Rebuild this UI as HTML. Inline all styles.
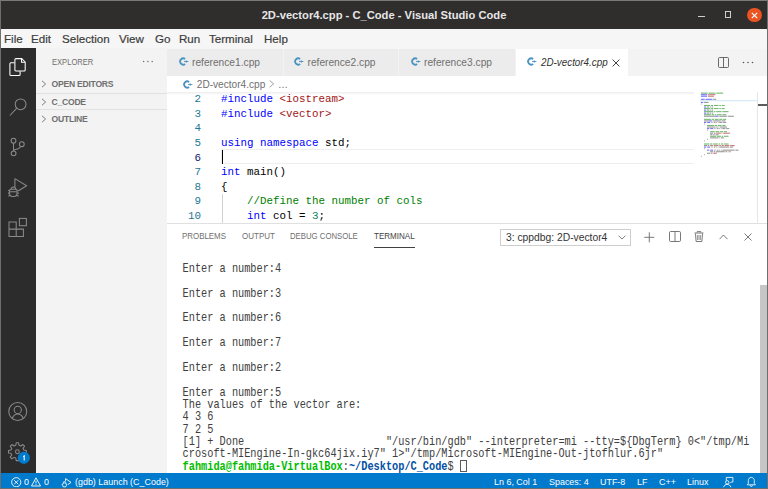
<!DOCTYPE html>
<html><head><meta charset="utf-8">
<style>
*{margin:0;padding:0;box-sizing:border-box}
html,body{width:768px;height:489px;overflow:hidden;background:#fff;font-family:"Liberation Sans",sans-serif}
.a{position:absolute}
#title{left:0;top:0;width:768px;height:29px;background:#302d2d}
#menu{left:0;top:29px;width:768px;height:20px;background:#f6f6f6}
#act{left:0;top:48px;width:36px;height:425px;background:#2c2c2c}
#side{left:36px;top:48px;width:131px;height:425px;background:#f3f3f3}
#tabs{left:167px;top:49px;width:601px;height:27px;background:#f3f3f3}
#crumb{left:167px;top:76px;width:601px;height:16px;background:#fff}
#editor{left:167px;top:92px;width:601px;height:131px;background:#fff;overflow:hidden}
#panel{left:167px;top:223px;width:601px;height:250px;background:#fff;border-top:1px solid #e0e0e0}
#status{left:0;top:473px;width:768px;height:15px;background:#007acc;color:#fff}
.mi{position:absolute;top:33px;font-size:11.6px;color:#3c3c3c;white-space:nowrap;-webkit-text-stroke:0.2px #3c3c3c}
.tab{position:absolute;top:0;height:27px;background:#ececec}
.tabt{position:absolute;top:7.9px;font-size:10.2px;color:#6f6f6f;white-space:nowrap}
.ci{position:absolute}
.code{position:absolute;left:54px;font-family:"Liberation Mono",monospace;font-size:10.83px;white-space:pre;color:#000;line-height:14.57px}
.ln{position:absolute;width:34px;text-align:right;font-family:"Liberation Mono",monospace;font-size:10.83px;color:#237893;line-height:14.57px}
.kw{color:#0000ff}.st{color:#a31515}.cm{color:#008000}.nm{color:#098658}
.term{position:absolute;left:15.6px;transform:scaleY(1.2);transform-origin:0 50%;font-family:"Liberation Mono",monospace;font-size:10.27px;white-space:pre;color:#404040;line-height:12.32px}
.ptx{position:absolute;font-size:8.6px;color:#6f6f6f;top:10px;white-space:nowrap}
.sb{position:absolute;top:2.8px;font-size:9.5px;transform:scaleX(0.94);transform-origin:0 0;color:#fff;white-space:nowrap}
</style></head><body>
<div id="title" class="a">
  <div class="a" style="left:0;top:0;width:768px;text-align:center;top:8.8px;font-size:11.2px;font-weight:bold;color:#e6e6e6;">2D-vector4.cpp - C_Code - Visual Studio Code</div>
  <div class="a" style="left:698.3px;top:16px;width:6.8px;height:1px;background:#cfcfcf"></div>
  <div class="a" style="left:725px;top:11.3px;width:6.2px;height:6.6px;border:1px solid #cfcfcf;border-top-width:1.6px"></div>
  <div class="a" style="left:747px;top:7.5px;width:14.5px;height:14.5px;border-radius:50%;background:#e95420"></div>
  <svg class="a" style="left:747px;top:7.5px" width="15" height="15" viewBox="0 0 15 15"><path d="M4.8 4.8L10.2 10.2M10.2 4.8L4.8 10.2" stroke="#fff" stroke-width="1.2"/></svg>
</div>
<div id="menu" class="a">
  <span class="mi" style="left:4px;top:3px">File</span>
  <span class="mi" style="left:31px;top:3px">Edit</span>
  <span class="mi" style="left:62px;top:3px">Selection</span>
  <span class="mi" style="left:119px;top:3px">View</span>
  <span class="mi" style="left:155px;top:3px">Go</span>
  <span class="mi" style="left:179px;top:3px">Run</span>
  <span class="mi" style="left:209px;top:3px">Terminal</span>
  <span class="mi" style="left:264px;top:3px">Help</span>
</div>
<div id="act" class="a"></div>
<svg class="a" style="left:0;top:0" width="36" height="473" viewBox="0 0 36 473">
  <g fill="none" stroke="#fff" stroke-width="1.05" stroke-linejoin="round">
    <path d="M16 58.6h5.8l3.4 3.4v8c0 0.6-0.4 1-1 1h-8.3c-0.6 0-1-0.4-1-1v-10.4c0-0.6 0.4-1 1.1-1z"/>
    <path d="M21.5 58.9v3.3h3.4"/>
    <path d="M14.4 62.8h-3.5c-0.6 0-1 0.4-1 1v10.7c0 0.6 0.4 1 1 1h8.2c0.6 0 1-0.4 1-1v-3.3"/>
  </g>
  <g fill="none" stroke="#8a8a8a" stroke-width="1.05">
    <circle cx="20.6" cy="104.3" r="5.4"/>
    <path d="M16.6 108.4L9.9 115.5"/>
    <circle cx="13.5" cy="140.7" r="2.4"/>
    <circle cx="13.6" cy="153.3" r="2.4"/>
    <circle cx="21.8" cy="144.2" r="2.4"/>
    <path d="M13.5 143.1v7.8"/>
    <path d="M20.6 146.4c-0.6 1.8-2.5 2.8-5.1 3.0c-1 0.1-1.8 0.6-1.9 1.5"/>
    <path d="M14.9 178.6v8.3M14.9 178.6L26.6 185.8L18.6 190.7"/>
    <path d="M10.6 189.2h5.4c0.6 0 1 0.4 1 1v3.2c0 1.7-1.5 3-3.2 3h-1c-1.7 0-3.2-1.3-3.2-3v-3.2c0-0.6 0.4-1 1-1z"/>
    <path d="M11.3 189.1c0-1.3 1-2.2 2.2-2.2s2.2 0.9 2.2 2.2M8.2 190.3l1.6 0.8M18.8 190.3l-1.6 0.8M8 193.1h1.6M19 193.1h-1.6M8.4 196.3l1.5-1M18.6 196.3l-1.5-1M10.1 191.7h6.8"/>
    <path d="M9 221.9h7.2v14.5H9zM9 229.1h14.4v7.3H16.2"/>
    <rect x="19.4" y="218.4" width="7" height="7.3"/>
    <circle cx="17.75" cy="411.45" r="9.0"/>
    <circle cx="17.75" cy="409.9" r="3.6"/>
    <path d="M12.3 418.3c1.1-2.8 3-4.3 5.45-4.3s4.35 1.5 5.45 4.3"/>
    <path d="M23.79 450.06 L26.32 450.50 L26.32 452.90 L23.79 453.34 L23.08 455.06 L24.55 457.16 L22.86 458.85 L20.76 457.38 L19.04 458.09 L18.60 460.62 L16.20 460.62 L15.76 458.09 L14.04 457.38 L11.94 458.85 L10.25 457.16 L11.72 455.06 L11.01 453.34 L8.48 452.90 L8.48 450.50 L11.01 450.06 L11.72 448.34 L10.25 446.24 L11.94 444.55 L14.04 446.02 L15.76 445.31 L16.20 442.78 L18.60 442.78 L19.04 445.31 L20.76 446.02 L22.86 444.55 L24.55 446.24 L23.08 448.34Z" stroke-linejoin="round"/>
    <circle cx="17.4" cy="451.7" r="1.9"/>
  </g>
  <circle cx="23.8" cy="457.8" r="6.1" fill="#007acc"/>
  <path d="M23.2 456.6l1-0.7v4.6" fill="none" stroke="#fff" stroke-width="1.1"/>
</svg>
<div id="side" class="a">
  <span class="a" style="left:15.6px;top:9px;font-size:9.2px;color:#6f6f6f;white-space:nowrap;transform:scaleX(0.825);transform-origin:0 0">EXPLORER</span>
  <svg class="a" style="left:105.5px;top:12.2px" width="12" height="3" viewBox="0 0 12 3"><circle cx="1.6" cy="1.5" r="0.75" fill="#6f6f6f"/><circle cx="5.9" cy="1.5" r="0.75" fill="#6f6f6f"/><circle cx="10.2" cy="1.5" r="0.75" fill="#6f6f6f"/></svg>
  <svg class="a" style="left:5px;top:32px" width="6" height="8" viewBox="0 0 6 8"><path d="M1 0.8L4.6 4L1 7.2" fill="none" stroke="#6f6f6f" stroke-width="0.9"/></svg>
  <span class="a" style="left:15.5px;top:31px;font-size:8.6px;font-weight:bold;color:#6f6f6f;letter-spacing:-0.25px;white-space:nowrap">OPEN EDITORS</span>
  <div class="a" style="left:0;top:45px;width:131px;height:1px;background:#e1e1e1"></div>
  <svg class="a" style="left:5px;top:50px" width="6" height="8" viewBox="0 0 6 8"><path d="M1 0.8L4.6 4L1 7.2" fill="none" stroke="#6f6f6f" stroke-width="0.9"/></svg>
  <span class="a" style="left:15.5px;top:49px;font-size:8.6px;font-weight:bold;color:#6f6f6f;letter-spacing:-0.25px;white-space:nowrap">C_CODE</span>
  <div class="a" style="left:0;top:61px;width:131px;height:1px;background:#e1e1e1"></div>
  <svg class="a" style="left:5px;top:67px" width="6" height="8" viewBox="0 0 6 8"><path d="M1 0.8L4.6 4L1 7.2" fill="none" stroke="#6f6f6f" stroke-width="0.9"/></svg>
  <span class="a" style="left:15.5px;top:66px;font-size:8.6px;font-weight:bold;color:#6f6f6f;letter-spacing:-0.25px;white-space:nowrap">OUTLINE</span>
</div>
<div id="tabs" class="a">
  <div class="tab" style="left:0;width:116px"></div>
  <div class="tab" style="left:117px;width:114px"></div>
  <div class="tab" style="left:232px;width:116px"></div>
  <div class="tab" style="left:349px;width:112px;background:#fff"></div>
  <svg class="a" style="left:11.5px;top:7.8px" width="10" height="9" viewBox="0 0 10 9"><path d="M6.1 2.0A3.1 3.1 0 1 0 6.1 7.0" fill="none" stroke="#4a93c0" stroke-width="1.8"/><path d="M5.0 4.5h4.4M7.3 3.3v2.4" stroke="#4a93c0" stroke-width="0.9"/></svg><span class="tabt" style="left:25px">reference1.cpp</span>
  <svg class="a" style="left:127.0px;top:7.8px" width="10" height="9" viewBox="0 0 10 9"><path d="M6.1 2.0A3.1 3.1 0 1 0 6.1 7.0" fill="none" stroke="#4a93c0" stroke-width="1.8"/><path d="M5.0 4.5h4.4M7.3 3.3v2.4" stroke="#4a93c0" stroke-width="0.9"/></svg><span class="tabt" style="left:140.5px">reference2.cpp</span>
  <svg class="a" style="left:243.5px;top:7.8px" width="10" height="9" viewBox="0 0 10 9"><path d="M6.1 2.0A3.1 3.1 0 1 0 6.1 7.0" fill="none" stroke="#4a93c0" stroke-width="1.8"/><path d="M5.0 4.5h4.4M7.3 3.3v2.4" stroke="#4a93c0" stroke-width="0.9"/></svg><span class="tabt" style="left:257px">reference3.cpp</span>
  <svg class="a" style="left:359.5px;top:7.8px" width="10" height="9" viewBox="0 0 10 9"><path d="M6.1 2.0A3.1 3.1 0 1 0 6.1 7.0" fill="none" stroke="#4a93c0" stroke-width="1.8"/><path d="M5.0 4.5h4.4M7.3 3.3v2.4" stroke="#4a93c0" stroke-width="0.9"/></svg><span class="tabt" style="left:373.5px;color:#333;font-style:italic;transform:scaleX(0.965);transform-origin:0 0">2D-vector4.cpp</span>
  <svg class="a" style="left:445px;top:9.5px" width="8" height="8" viewBox="0 0 8 8"><path d="M0.6 0.6L7.4 7.4M7.4 0.6L0.6 7.4" stroke="#424242" stroke-width="1"/></svg>
  <svg class="a" style="left:551px;top:7.5px" width="11" height="11" viewBox="0 0 11 11"><rect x="0.5" y="0.5" width="10" height="10" rx="1" fill="none" stroke="#5a5a5a" stroke-width="0.9"/><path d="M5.5 0.5v10" stroke="#5a5a5a" stroke-width="0.9"/></svg>
  <svg class="a" style="left:575px;top:11.5px" width="12" height="3" viewBox="0 0 12 3"><circle cx="1.5" cy="1.5" r="0.8" fill="#5a5a5a"/><circle cx="6" cy="1.5" r="0.8" fill="#5a5a5a"/><circle cx="10.5" cy="1.5" r="0.8" fill="#5a5a5a"/></svg>
</div>
<div id="crumb" class="a">
  <svg class="a" style="left:16.0px;top:3.5px" width="10" height="9" viewBox="0 0 10 9"><path d="M6.1 2.0A3.1 3.1 0 1 0 6.1 7.0" fill="none" stroke="#4a93c0" stroke-width="1.8"/><path d="M5.0 4.5h4.4M7.3 3.3v2.4" stroke="#4a93c0" stroke-width="0.9"/></svg><span class="a" style="left:29.8px;top:3.4px;font-size:10.1px;color:#6f6f6f;white-space:nowrap">2D-vector4.cpp</span>
  <svg class="a" style="left:102.4px;top:4.3px" width="6" height="8" viewBox="0 0 6 8"><path d="M0.6 0.4L4.6 3.8L0.6 7.2" fill="none" stroke="#888" stroke-width="0.8"/></svg>
  <span class="a" style="left:111px;top:3.4px;font-size:10px;color:#6f6f6f">…</span>
</div>
<div id="editor" class="a">
<div class="a" style="left:54px;top:57.38px;width:473px;height:15px;border:1px solid #eeeeee;border-right:none"></div>
<div class="a" style="left:54.5px;top:57.88px;width:1.4px;height:14px;background:#000"></div>
<div class="a" style="left:54.5px;top:101.59px;width:1px;height:43.71px;background:#d3d3d3"></div>
<div class="ln" style="left:0;top:0.30px">2</div>
<div class="code" style="top:0.30px"><span class="kw">#include</span> <span class="st">&lt;iostream&gt;</span></div>
<div class="ln" style="left:0;top:14.87px">3</div>
<div class="code" style="top:14.87px"><span class="kw">#include</span> <span class="st">&lt;vector&gt;</span></div>
<div class="ln" style="left:0;top:29.44px">4</div>
<div class="code" style="top:29.44px"></div>
<div class="ln" style="left:0;top:44.01px">5</div>
<div class="code" style="top:44.01px"><span class="kw">using</span> <span class="kw">namespace</span> std;</div>
<div class="ln" style="left:0;top:58.58px;color:#0b216f">6</div>
<div class="code" style="top:58.58px"></div>
<div class="ln" style="left:0;top:73.15px">7</div>
<div class="code" style="top:73.15px"><span class="kw">int</span> main()</div>
<div class="ln" style="left:0;top:87.72px">8</div>
<div class="code" style="top:87.72px">{</div>
<div class="ln" style="left:0;top:102.29px">9</div>
<div class="code" style="top:102.29px">    <span class="cm">//Define the number of cols</span></div>
<div class="ln" style="left:0;top:116.86px">10</div>
<div class="code" style="top:116.86px">    <span class="kw">int</span> col = <span class="nm">3</span>;</div>
<div class="ln" style="left:0;top:131.43px">11</div>
<div class="code" style="top:131.43px">    <span class="kw">int</span> row = <span class="nm">2</span>;</div>
</div>
<svg class="a" style="left:700px;top:92px" width="58" height="70" viewBox="0 0 58 70">
<rect x="0" y="8.20" width="57" height="1" fill="#9fd0f0" fill-opacity="0.5"/>
<rect x="0.90" y="0.60" width="6.90" height="1.1" fill="#008000" fill-opacity="0.55"/><rect x="8.57" y="0.60" width="6.90" height="1.1" fill="#008000" fill-opacity="0.55"/><rect x="16.24" y="0.60" width="6.90" height="1.1" fill="#008000" fill-opacity="0.55"/><rect x="0.90" y="2.14" width="6.14" height="1.1" fill="#0000ff" fill-opacity="0.55"/><rect x="7.80" y="2.14" width="7.67" height="1.1" fill="#a31515" fill-opacity="0.55"/><rect x="0.90" y="3.68" width="6.14" height="1.1" fill="#0000ff" fill-opacity="0.55"/><rect x="7.80" y="3.68" width="6.14" height="1.1" fill="#a31515" fill-opacity="0.55"/><rect x="0.90" y="6.76" width="3.83" height="1.1" fill="#0000ff" fill-opacity="0.55"/><rect x="5.50" y="6.76" width="6.90" height="1.1" fill="#0000ff" fill-opacity="0.55"/><rect x="13.17" y="6.76" width="3.07" height="1.1" fill="#000000" fill-opacity="0.4"/><rect x="0.90" y="9.85" width="2.30" height="1.1" fill="#0000ff" fill-opacity="0.55"/><rect x="3.97" y="9.85" width="4.60" height="1.1" fill="#000000" fill-opacity="0.4"/><rect x="0.90" y="11.39" width="0.77" height="1.1" fill="#000000" fill-opacity="0.4"/><rect x="3.97" y="12.93" width="6.14" height="1.1" fill="#008000" fill-opacity="0.55"/><rect x="10.87" y="12.93" width="2.30" height="1.1" fill="#008000" fill-opacity="0.55"/><rect x="13.94" y="12.93" width="4.60" height="1.1" fill="#008000" fill-opacity="0.55"/><rect x="19.31" y="12.93" width="1.53" height="1.1" fill="#008000" fill-opacity="0.55"/><rect x="21.61" y="12.93" width="3.07" height="1.1" fill="#008000" fill-opacity="0.55"/><rect x="3.97" y="14.47" width="2.30" height="1.1" fill="#0000ff" fill-opacity="0.55"/><rect x="7.04" y="14.47" width="2.30" height="1.1" fill="#000000" fill-opacity="0.4"/><rect x="10.10" y="14.47" width="0.77" height="1.1" fill="#000000" fill-opacity="0.4"/><rect x="11.64" y="14.47" width="0.77" height="1.1" fill="#098658" fill-opacity="0.55"/><rect x="12.41" y="14.47" width="0.77" height="1.1" fill="#000000" fill-opacity="0.4"/><rect x="3.97" y="16.01" width="6.14" height="1.1" fill="#008000" fill-opacity="0.55"/><rect x="10.87" y="16.01" width="2.30" height="1.1" fill="#008000" fill-opacity="0.55"/><rect x="13.94" y="16.01" width="4.60" height="1.1" fill="#008000" fill-opacity="0.55"/><rect x="19.31" y="16.01" width="1.53" height="1.1" fill="#008000" fill-opacity="0.55"/><rect x="21.61" y="16.01" width="3.07" height="1.1" fill="#008000" fill-opacity="0.55"/><rect x="3.97" y="17.55" width="2.30" height="1.1" fill="#0000ff" fill-opacity="0.55"/><rect x="7.04" y="17.55" width="2.30" height="1.1" fill="#000000" fill-opacity="0.4"/><rect x="10.10" y="17.55" width="0.77" height="1.1" fill="#000000" fill-opacity="0.4"/><rect x="11.64" y="17.55" width="0.77" height="1.1" fill="#098658" fill-opacity="0.55"/><rect x="12.41" y="17.55" width="0.77" height="1.1" fill="#000000" fill-opacity="0.4"/><rect x="3.97" y="19.09" width="9.20" height="1.1" fill="#008000" fill-opacity="0.55"/><rect x="13.94" y="19.09" width="1.53" height="1.1" fill="#008000" fill-opacity="0.55"/><rect x="16.24" y="19.09" width="5.37" height="1.1" fill="#008000" fill-opacity="0.55"/><rect x="22.38" y="19.09" width="6.14" height="1.1" fill="#008000" fill-opacity="0.55"/><rect x="3.97" y="20.63" width="2.30" height="1.1" fill="#0000ff" fill-opacity="0.55"/><rect x="7.04" y="20.63" width="2.30" height="1.1" fill="#000000" fill-opacity="0.4"/><rect x="10.10" y="20.63" width="0.77" height="1.1" fill="#000000" fill-opacity="0.4"/><rect x="11.64" y="20.63" width="0.77" height="1.1" fill="#098658" fill-opacity="0.55"/><rect x="12.41" y="20.63" width="0.77" height="1.1" fill="#000000" fill-opacity="0.4"/><rect x="3.97" y="22.17" width="6.90" height="1.1" fill="#008000" fill-opacity="0.55"/><rect x="11.64" y="22.17" width="2.30" height="1.1" fill="#008000" fill-opacity="0.55"/><rect x="14.71" y="22.17" width="1.53" height="1.1" fill="#008000" fill-opacity="0.55"/><rect x="17.01" y="22.17" width="4.60" height="1.1" fill="#008000" fill-opacity="0.55"/><rect x="22.38" y="22.17" width="3.83" height="1.1" fill="#008000" fill-opacity="0.55"/><rect x="3.97" y="23.71" width="11.51" height="1.1" fill="#000000" fill-opacity="0.4"/><rect x="15.47" y="23.71" width="2.30" height="1.1" fill="#0000ff" fill-opacity="0.55"/><rect x="17.77" y="23.71" width="0.77" height="1.1" fill="#000000" fill-opacity="0.4"/><rect x="19.31" y="23.71" width="7.67" height="1.1" fill="#000000" fill-opacity="0.4"/><rect x="27.74" y="23.71" width="6.14" height="1.1" fill="#000000" fill-opacity="0.4"/><rect x="3.97" y="26.80" width="6.90" height="1.1" fill="#008000" fill-opacity="0.55"/><rect x="11.64" y="26.80" width="2.30" height="1.1" fill="#008000" fill-opacity="0.55"/><rect x="14.71" y="26.80" width="3.83" height="1.1" fill="#008000" fill-opacity="0.55"/><rect x="19.31" y="26.80" width="3.07" height="1.1" fill="#008000" fill-opacity="0.55"/><rect x="23.14" y="26.80" width="3.07" height="1.1" fill="#008000" fill-opacity="0.55"/><rect x="3.97" y="28.34" width="5.37" height="1.1" fill="#000000" fill-opacity="0.4"/><rect x="9.34" y="28.34" width="2.30" height="1.1" fill="#0000ff" fill-opacity="0.55"/><rect x="11.64" y="28.34" width="0.77" height="1.1" fill="#000000" fill-opacity="0.4"/><rect x="13.17" y="28.34" width="7.67" height="1.1" fill="#000000" fill-opacity="0.4"/><rect x="21.61" y="28.34" width="3.83" height="1.1" fill="#000000" fill-opacity="0.4"/><rect x="3.97" y="29.88" width="2.30" height="1.1" fill="#0000ff" fill-opacity="0.55"/><rect x="7.04" y="29.88" width="0.77" height="1.1" fill="#000000" fill-opacity="0.4"/><rect x="7.80" y="29.88" width="2.30" height="1.1" fill="#0000ff" fill-opacity="0.55"/><rect x="10.87" y="29.88" width="0.77" height="1.1" fill="#000000" fill-opacity="0.4"/><rect x="12.41" y="29.88" width="0.77" height="1.1" fill="#000000" fill-opacity="0.4"/><rect x="13.94" y="29.88" width="1.53" height="1.1" fill="#000000" fill-opacity="0.4"/><rect x="16.24" y="29.88" width="0.77" height="1.1" fill="#000000" fill-opacity="0.4"/><rect x="17.77" y="29.88" width="0.77" height="1.1" fill="#000000" fill-opacity="0.4"/><rect x="19.31" y="29.88" width="3.07" height="1.1" fill="#000000" fill-opacity="0.4"/><rect x="23.14" y="29.88" width="3.07" height="1.1" fill="#000000" fill-opacity="0.4"/><rect x="3.97" y="31.42" width="0.77" height="1.1" fill="#000000" fill-opacity="0.4"/><rect x="7.04" y="32.96" width="6.90" height="1.1" fill="#008000" fill-opacity="0.55"/><rect x="14.71" y="32.96" width="2.30" height="1.1" fill="#008000" fill-opacity="0.55"/><rect x="17.77" y="32.96" width="3.83" height="1.1" fill="#008000" fill-opacity="0.55"/><rect x="22.38" y="32.96" width="3.07" height="1.1" fill="#008000" fill-opacity="0.55"/><rect x="7.04" y="34.50" width="8.44" height="1.1" fill="#000000" fill-opacity="0.4"/><rect x="16.24" y="34.50" width="1.53" height="1.1" fill="#000000" fill-opacity="0.4"/><rect x="18.54" y="34.50" width="0.77" height="1.1" fill="#000000" fill-opacity="0.4"/><rect x="20.07" y="34.50" width="6.90" height="1.1" fill="#000000" fill-opacity="0.4"/><rect x="7.04" y="36.04" width="2.30" height="1.1" fill="#0000ff" fill-opacity="0.55"/><rect x="10.10" y="36.04" width="0.77" height="1.1" fill="#000000" fill-opacity="0.4"/><rect x="10.87" y="36.04" width="2.30" height="1.1" fill="#0000ff" fill-opacity="0.55"/><rect x="13.94" y="36.04" width="0.77" height="1.1" fill="#000000" fill-opacity="0.4"/><rect x="15.47" y="36.04" width="0.77" height="1.1" fill="#000000" fill-opacity="0.4"/><rect x="17.01" y="36.04" width="1.53" height="1.1" fill="#000000" fill-opacity="0.4"/><rect x="19.31" y="36.04" width="0.77" height="1.1" fill="#000000" fill-opacity="0.4"/><rect x="20.84" y="36.04" width="0.77" height="1.1" fill="#000000" fill-opacity="0.4"/><rect x="22.38" y="36.04" width="3.07" height="1.1" fill="#000000" fill-opacity="0.4"/><rect x="26.21" y="36.04" width="3.07" height="1.1" fill="#000000" fill-opacity="0.4"/><rect x="7.04" y="37.58" width="0.77" height="1.1" fill="#000000" fill-opacity="0.4"/><rect x="10.10" y="39.12" width="4.60" height="1.1" fill="#008000" fill-opacity="0.55"/><rect x="15.47" y="39.12" width="3.83" height="1.1" fill="#008000" fill-opacity="0.55"/><rect x="20.07" y="39.12" width="3.07" height="1.1" fill="#008000" fill-opacity="0.55"/><rect x="23.91" y="39.12" width="3.07" height="1.1" fill="#008000" fill-opacity="0.55"/><rect x="10.10" y="40.67" width="3.07" height="1.1" fill="#000000" fill-opacity="0.4"/><rect x="13.94" y="40.67" width="1.53" height="1.1" fill="#000000" fill-opacity="0.4"/><rect x="16.24" y="40.67" width="4.60" height="1.1" fill="#a31515" fill-opacity="0.55"/><rect x="21.61" y="40.67" width="0.77" height="1.1" fill="#a31515" fill-opacity="0.55"/><rect x="23.14" y="40.67" width="6.90" height="1.1" fill="#a31515" fill-opacity="0.55"/><rect x="10.10" y="42.21" width="2.30" height="1.1" fill="#000000" fill-opacity="0.4"/><rect x="13.17" y="42.21" width="1.53" height="1.1" fill="#000000" fill-opacity="0.4"/><rect x="15.47" y="42.21" width="3.07" height="1.1" fill="#000000" fill-opacity="0.4"/><rect x="10.10" y="43.75" width="6.14" height="1.1" fill="#008000" fill-opacity="0.55"/><rect x="17.01" y="43.75" width="3.83" height="1.1" fill="#008000" fill-opacity="0.55"/><rect x="21.61" y="43.75" width="1.53" height="1.1" fill="#008000" fill-opacity="0.55"/><rect x="23.91" y="43.75" width="4.60" height="1.1" fill="#008000" fill-opacity="0.55"/><rect x="10.10" y="45.29" width="8.44" height="1.1" fill="#000000" fill-opacity="0.4"/><rect x="19.31" y="45.29" width="0.77" height="1.1" fill="#000000" fill-opacity="0.4"/><rect x="20.84" y="45.29" width="3.07" height="1.1" fill="#000000" fill-opacity="0.4"/><rect x="7.04" y="46.83" width="0.77" height="1.1" fill="#000000" fill-opacity="0.4"/><rect x="3.97" y="48.37" width="0.77" height="1.1" fill="#000000" fill-opacity="0.4"/><rect x="3.97" y="51.45" width="5.37" height="1.1" fill="#008000" fill-opacity="0.55"/><rect x="10.10" y="51.45" width="2.30" height="1.1" fill="#008000" fill-opacity="0.55"/><rect x="13.17" y="51.45" width="4.60" height="1.1" fill="#008000" fill-opacity="0.55"/><rect x="18.54" y="51.45" width="1.53" height="1.1" fill="#008000" fill-opacity="0.55"/><rect x="20.84" y="51.45" width="2.30" height="1.1" fill="#008000" fill-opacity="0.55"/><rect x="23.91" y="51.45" width="4.60" height="1.1" fill="#008000" fill-opacity="0.55"/><rect x="3.97" y="52.99" width="3.07" height="1.1" fill="#000000" fill-opacity="0.4"/><rect x="7.80" y="52.99" width="1.53" height="1.1" fill="#000000" fill-opacity="0.4"/><rect x="10.10" y="52.99" width="3.07" height="1.1" fill="#a31515" fill-opacity="0.55"/><rect x="13.94" y="52.99" width="4.60" height="1.1" fill="#a31515" fill-opacity="0.55"/><rect x="19.31" y="52.99" width="1.53" height="1.1" fill="#a31515" fill-opacity="0.55"/><rect x="21.61" y="52.99" width="2.30" height="1.1" fill="#a31515" fill-opacity="0.55"/><rect x="24.68" y="52.99" width="4.60" height="1.1" fill="#a31515" fill-opacity="0.55"/><rect x="30.05" y="52.99" width="4.60" height="1.1" fill="#a31515" fill-opacity="0.55"/><rect x="3.97" y="54.53" width="2.30" height="1.1" fill="#0000ff" fill-opacity="0.55"/><rect x="7.04" y="54.53" width="0.77" height="1.1" fill="#000000" fill-opacity="0.4"/><rect x="7.80" y="54.53" width="2.30" height="1.1" fill="#0000ff" fill-opacity="0.55"/><rect x="10.87" y="54.53" width="0.77" height="1.1" fill="#000000" fill-opacity="0.4"/><rect x="12.41" y="54.53" width="0.77" height="1.1" fill="#000000" fill-opacity="0.4"/><rect x="13.94" y="54.53" width="1.53" height="1.1" fill="#000000" fill-opacity="0.4"/><rect x="16.24" y="54.53" width="0.77" height="1.1" fill="#000000" fill-opacity="0.4"/><rect x="17.77" y="54.53" width="0.77" height="1.1" fill="#000000" fill-opacity="0.4"/><rect x="19.31" y="54.53" width="9.97" height="1.1" fill="#000000" fill-opacity="0.4"/><rect x="30.05" y="54.53" width="3.07" height="1.1" fill="#000000" fill-opacity="0.4"/><rect x="3.97" y="56.08" width="0.77" height="1.1" fill="#000000" fill-opacity="0.4"/><rect x="7.04" y="57.62" width="2.30" height="1.1" fill="#0000ff" fill-opacity="0.55"/><rect x="10.10" y="57.62" width="0.77" height="1.1" fill="#000000" fill-opacity="0.4"/><rect x="10.87" y="57.62" width="2.30" height="1.1" fill="#0000ff" fill-opacity="0.55"/><rect x="13.94" y="57.62" width="0.77" height="1.1" fill="#000000" fill-opacity="0.4"/><rect x="15.47" y="57.62" width="0.77" height="1.1" fill="#000000" fill-opacity="0.4"/><rect x="17.01" y="57.62" width="1.53" height="1.1" fill="#000000" fill-opacity="0.4"/><rect x="19.31" y="57.62" width="0.77" height="1.1" fill="#000000" fill-opacity="0.4"/><rect x="20.84" y="57.62" width="0.77" height="1.1" fill="#000000" fill-opacity="0.4"/><rect x="22.38" y="57.62" width="12.27" height="1.1" fill="#000000" fill-opacity="0.4"/><rect x="35.41" y="57.62" width="3.07" height="1.1" fill="#000000" fill-opacity="0.4"/><rect x="10.10" y="59.16" width="3.07" height="1.1" fill="#000000" fill-opacity="0.4"/><rect x="13.94" y="59.16" width="1.53" height="1.1" fill="#000000" fill-opacity="0.4"/><rect x="16.24" y="59.16" width="8.44" height="1.1" fill="#000000" fill-opacity="0.4"/><rect x="25.44" y="59.16" width="1.53" height="1.1" fill="#000000" fill-opacity="0.4"/><rect x="27.74" y="59.16" width="0.77" height="1.1" fill="#a31515" fill-opacity="0.55"/><rect x="29.28" y="59.16" width="0.77" height="1.1" fill="#a31515" fill-opacity="0.55"/><rect x="30.05" y="59.16" width="0.77" height="1.1" fill="#000000" fill-opacity="0.4"/><rect x="7.04" y="60.70" width="3.07" height="1.1" fill="#000000" fill-opacity="0.4"/><rect x="10.87" y="60.70" width="1.53" height="1.1" fill="#000000" fill-opacity="0.4"/><rect x="13.17" y="60.70" width="3.07" height="1.1" fill="#a31515" fill-opacity="0.55"/><rect x="16.24" y="60.70" width="0.77" height="1.1" fill="#000000" fill-opacity="0.4"/><rect x="3.97" y="62.24" width="0.77" height="1.1" fill="#000000" fill-opacity="0.4"/><rect x="0.90" y="63.78" width="0.77" height="1.1" fill="#000000" fill-opacity="0.4"/>
</svg>
<div class="a" style="left:757px;top:92px;width:1px;height:131px;background:#e6e6e6"></div>
<div class="a" style="left:758px;top:104px;width:9px;height:1.6px;background:#5c5c5c"></div>
<div class="a" style="left:167px;top:92px;width:527px;height:3px;background:linear-gradient(to bottom, rgba(0,0,0,0.07), rgba(0,0,0,0))"></div>
<div id="panel" class="a">
<span class="a" style="left:15.300000000000011px;top:6.3px;font-size:9.9px;color:#6f6f6f;white-space:nowrap;transform:scaleX(0.801);transform-origin:0 0;">PROBLEMS</span>
<span class="a" style="left:74.5px;top:6.3px;font-size:9.9px;color:#6f6f6f;white-space:nowrap;transform:scaleX(0.810);transform-origin:0 0;">OUTPUT</span>
<span class="a" style="left:123.10000000000002px;top:6.3px;font-size:9.9px;color:#6f6f6f;white-space:nowrap;transform:scaleX(0.787);transform-origin:0 0;">DEBUG CONSOLE</span>
<span class="a" style="left:206.89999999999998px;top:6.3px;font-size:9.9px;color:#424242;white-space:nowrap;transform:scaleX(0.813);transform-origin:0 0;">TERMINAL</span>
<div class="a" style="left:207px;top:23.19999999999999px;width:41px;height:1px;background:#424242"></div>
<div class="a" style="left:332.5px;top:5px;width:131px;height:16.5px;border:1px solid #cecece;background:#fff"></div>
<span class="a" style="left:339.3px;top:7.599999999999994px;font-size:10px;color:#333;white-space:nowrap;transform:scaleX(1.03);transform-origin:0 0">3: cppdbg: 2D-vector4</span>
<svg class="a" style="left:450.5px;top:11px" width="8" height="5" viewBox="0 0 8 5"><path d="M0.6 0.8L4 4L7.4 0.8" fill="none" stroke="#6f6f6f" stroke-width="0.9"/></svg>
<svg class="a" style="left:477px;top:7.5px" width="11" height="11" viewBox="0 0 11 11"><path d="M5.3 0.3v10M0.3 5.3h10" stroke="#6a6a6a" stroke-width="0.9"/></svg>
<svg class="a" style="left:501.5px;top:7px" width="12" height="11" viewBox="0 0 12 11"><rect x="0.5" y="0.5" width="11" height="10" rx="1.2" fill="none" stroke="#6a6a6a" stroke-width="0.9"/><path d="M6 0.5v10" stroke="#6a6a6a" stroke-width="0.9"/></svg>
<svg class="a" style="left:526.5px;top:7px" width="10" height="11" viewBox="0 0 10 11"><path d="M3.2 1.5V0.6h3.6v0.9M0.5 2h9M1.5 2.5l0.6 8h5.8l0.6-8" fill="none" stroke="#6a6a6a" stroke-width="0.9"/><path d="M3.6 4v5M5 4v5M6.4 4v5" stroke="#6a6a6a" stroke-width="0.7"/></svg>
<svg class="a" style="left:552px;top:9.800000000000011px" width="9" height="6" viewBox="0 0 9 6"><path d="M0.5 5.2L4.5 1L8.5 5.2" fill="none" stroke="#6a6a6a" stroke-width="0.9"/></svg>
<svg class="a" style="left:577.3px;top:9px" width="8" height="8" viewBox="0 0 8 8"><path d="M0.5 0.5L7.5 7.5M7.5 0.5L0.5 7.5" stroke="#6a6a6a" stroke-width="0.9"/></svg>
<div class="term" style="top:25.69px"></div>
<div class="term" style="top:38.04px">Enter a number:4</div>
<div class="term" style="top:50.39px"></div>
<div class="term" style="top:62.74px">Enter a number:3</div>
<div class="term" style="top:75.09px"></div>
<div class="term" style="top:87.44px">Enter a number:6</div>
<div class="term" style="top:99.79px"></div>
<div class="term" style="top:112.14px">Enter a number:7</div>
<div class="term" style="top:124.49px"></div>
<div class="term" style="top:136.84px">Enter a number:2</div>
<div class="term" style="top:149.19px"></div>
<div class="term" style="top:161.54px">Enter a number:5</div>
<div class="term" style="top:173.89px">The values of the vector are:</div>
<div class="term" style="top:186.24px">4 3 6</div>
<div class="term" style="top:198.59px">7 2 5</div>
<div class="term" style="top:210.94px">[1] + Done                       "/usr/bin/gdb" --interpreter=mi --tty=${DbgTerm} 0&lt;"/tmp/Mi</div>
<div class="term" style="top:223.29px">crosoft-MIEngine-In-gkc64jix.iy7" 1&gt;"/tmp/Microsoft-MIEngine-Out-jtofhlur.6jr"</div>
<div class="term" style="top:235.64px"><b style="color:#00bc00">fahmida@fahmida-VirtualBox</b>:<b style="color:#0451a5">~/Desktop/C_Code</b>$ </div>
<div class="a" style="left:293.3px;top:235.9px;width:6.4px;height:11.7px;border:1px solid #5a5a5a"></div>
<div class="a" style="left:593px;top:60.5px;width:7px;height:188.5px;background:#c6c6c6"></div>
</div>
<div id="status" class="a">
  <svg class="a" style="left:11px;top:3.8px" width="10.5" height="10.5" viewBox="0 0 10.5 10.5"><circle cx="5.25" cy="5.25" r="4.6" fill="none" stroke="#fff" stroke-width="0.9"/><path d="M3.3 3.3L7.2 7.2M7.2 3.3L3.3 7.2" stroke="#fff" stroke-width="0.9"/></svg>
  <span class="sb" style="left:23.5px">0</span>
  <svg class="a" style="left:31.3px;top:3.6px" width="11" height="10" viewBox="0 0 11 10"><path d="M5 0.8L9.5 9.0H0.5Z" fill="none" stroke="#fff" stroke-width="0.9" stroke-linejoin="round"/><path d="M5 3.6v2.8M5 7v0.9" stroke="#fff" stroke-width="0.9"/></svg>
  <span class="sb" style="left:43.8px">0</span>
  <svg class="a" style="left:60px;top:0" width="14" height="15" viewBox="60 473 14 15"><path d="M65.6 481.2V478.6L71 482.4L68 484.5" fill="none" stroke="#fff" stroke-width="0.9" stroke-linejoin="round"/><rect x="62.6" y="482.9" width="3.8" height="4" rx="1.5" fill="none" stroke="#fff" stroke-width="0.85"/><path d="M63.2 482.8a1.3 1.3 0 0 1 2.6 0M61.6 484.6h1M66.4 484.6h1" fill="none" stroke="#fff" stroke-width="0.7"/></svg>
  <span class="sb" style="left:74.5px">(gdb) Launch (C_Code)</span>
  <span class="sb" style="left:494px">Ln 6, Col 1</span>
  <span class="sb" style="left:549px">Spaces: 4</span>
  <span class="sb" style="left:600px">UTF-8</span>
  <span class="sb" style="left:637px">LF</span>
  <span class="sb" style="left:659px">C++</span>
  <span class="sb" style="left:687px">Linux</span>
  <svg class="a" style="left:720px;top:0" width="16" height="15" viewBox="720 473 16 15"><path d="M726.3 480.6V477.4h6.6v4.6h-1.6l-1.3 1.3" fill="none" stroke="#fff" stroke-width="0.85" stroke-linejoin="round"/><circle cx="727.2" cy="482.3" r="1.7" fill="#007acc" stroke="#fff" stroke-width="0.85"/><path d="M723.6 487.2c0.6-1.9 1.8-2.8 3.6-2.8s3 0.9 3.6 2.8" fill="none" stroke="#fff" stroke-width="0.85"/></svg>
  <svg class="a" style="left:745px;top:0" width="13" height="15" viewBox="745 473 13 15"><path d="M751.3 477.4c-1.8 0-3 1.4-3 3.2v2.9l-1.1 1.3h8.2l-1.1-1.3v-2.9c0-1.8-1.2-3.2-3-3.2z" fill="none" stroke="#fff" stroke-width="0.85" stroke-linejoin="round"/><path d="M750.2 485.3a1.1 1.1 0 0 0 2.2 0" fill="none" stroke="#fff" stroke-width="0.85"/></svg>
</div>
<div class="a" style="left:0;top:0;width:1px;height:489px;background:#6e6e6e"></div><div class="a" style="left:0;top:488px;width:768px;height:1px;background:#6e6e6e"></div><div class="a" style="left:0;top:0;width:768px;height:1px;background:#7a7a7a"></div>
<div class="a" style="left:767px;top:0;width:1px;height:489px;background:#6e6e6e"></div>
</body></html>
